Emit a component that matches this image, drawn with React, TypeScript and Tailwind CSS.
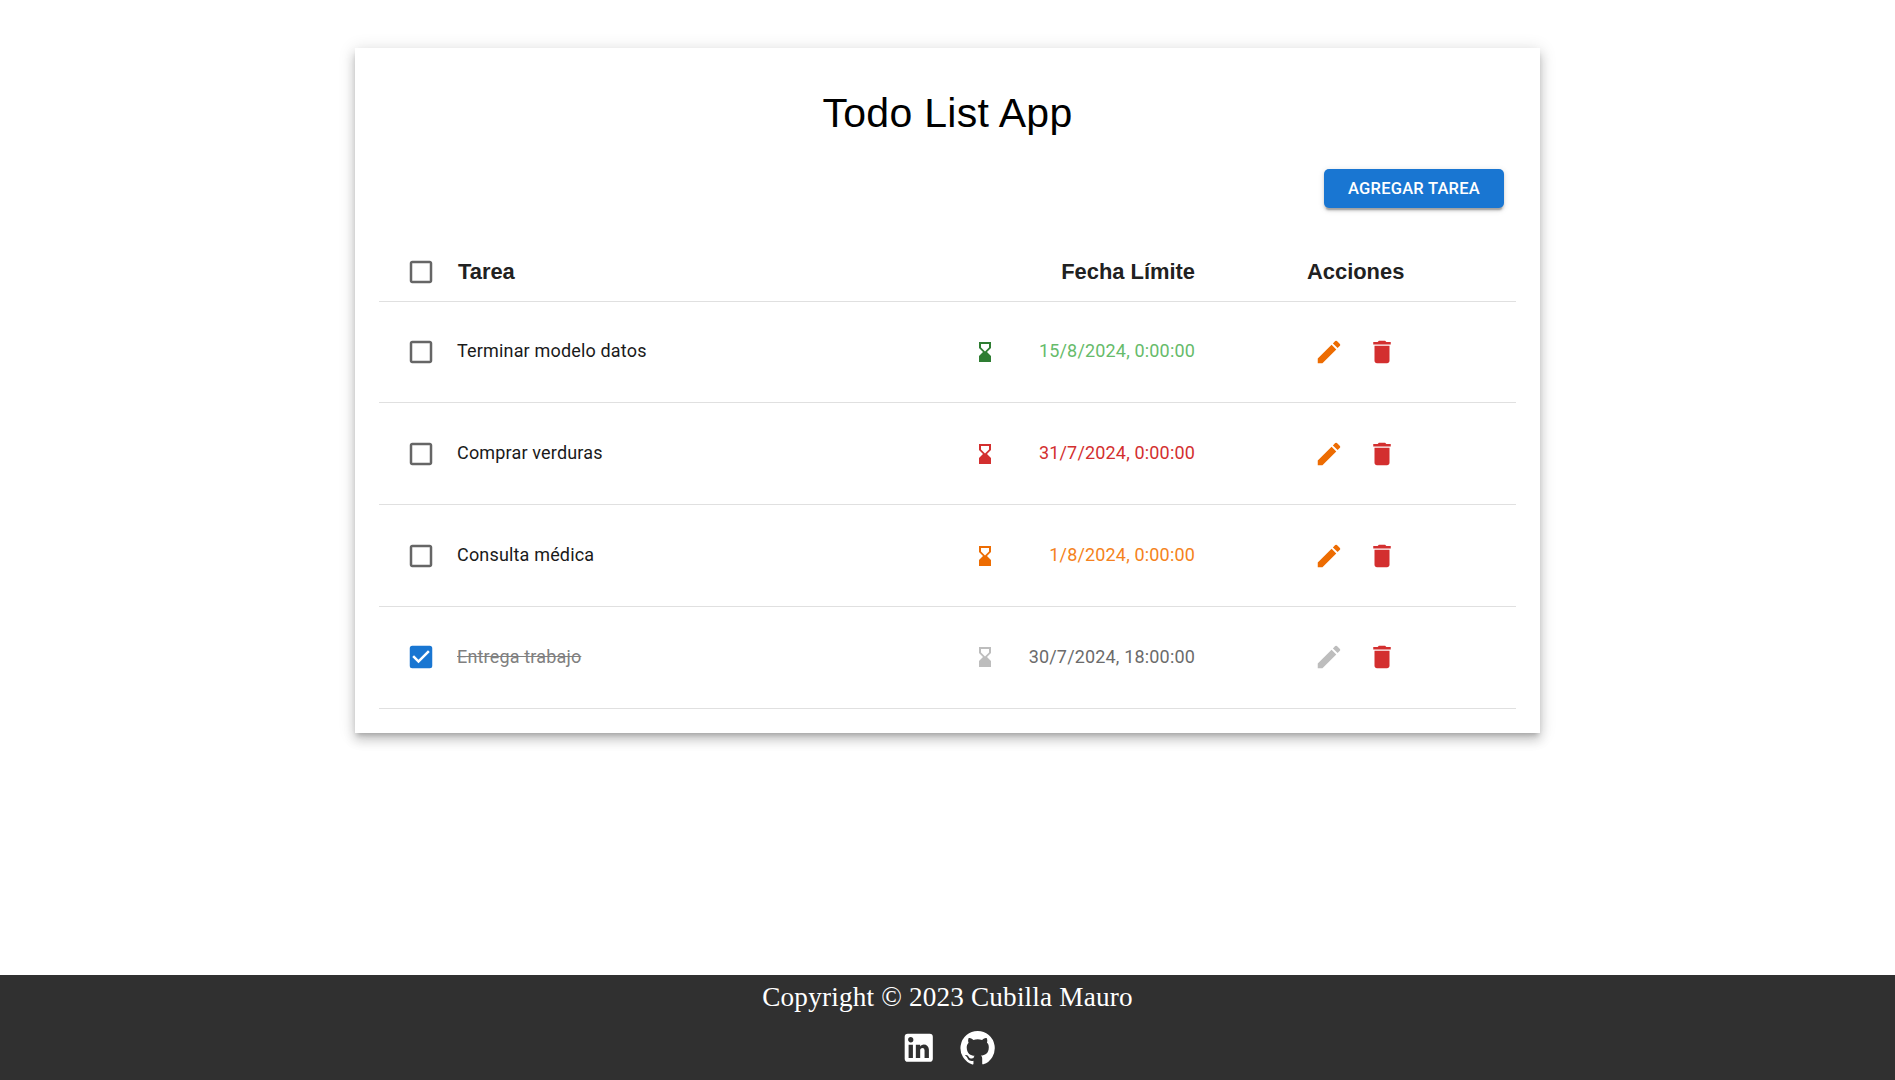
import { MdCheckBox, MdCheckBoxOutlineBlank, MdCreate, MdDelete, MdHourglassBottom } from 'react-icons/md';

type Task = {
  name: string;
  due: string;
  done: boolean;
  icon: string;
  date: string;
  height: string;
};

const tasks: Task[] = [
  { name: 'Terminar modelo datos', due: '15/8/2024, 0:00:00', done: false, icon: 'text-[#2e7d32]', date: 'text-[#66bb6a]', height: 'h-[101px]' },
  { name: 'Comprar verduras', due: '31/7/2024, 0:00:00', done: false, icon: 'text-[#d32f2f]', date: 'text-[#d32f2f]', height: 'h-[102px]' },
  { name: 'Consulta médica', due: '1/8/2024, 0:00:00', done: false, icon: 'text-[#ed6c02]', date: 'text-[#f58220]', height: 'h-[102px]' },
  { name: 'Entrega trabajo', due: '30/7/2024, 18:00:00', done: true, icon: 'text-[#bdbdbd]', date: 'text-[#6b6b6b]', height: 'h-[102px] pb-[2px]' },
];

function LinkedInIcon() {
  return (
    <svg viewBox="0 0 24 24" className="size-[37.5px] fill-current">
      <path d="M19 3a2 2 0 0 1 2 2v14a2 2 0 0 1-2 2H5a2 2 0 0 1-2-2V5a2 2 0 0 1 2-2h14m-.5 15.5v-5.3a3.26 3.26 0 0 0-3.26-3.26c-.85 0-1.84.52-2.32 1.3v-1.11h-2.79v8.37h2.79v-4.93c0-.77.62-1.4 1.39-1.4a1.4 1.4 0 0 1 1.4 1.4v4.93h2.79M6.88 8.56a1.68 1.68 0 0 0 1.68-1.68c0-.93-.75-1.69-1.68-1.69a1.69 1.69 0 0 0-1.69 1.69c0 .93.76 1.68 1.69 1.68m1.39 9.94v-8.37H5.5v8.37h2.77z" />
    </svg>
  );
}

function GitHubIcon() {
  return (
    <svg viewBox="0 0 24 24" className="size-[37.5px] fill-current">
      <path d="M12 1.27a11 11 0 0 0-3.48 21.46c.55.09.73-.28.73-.55v-1.84c-3.03.64-3.67-1.46-3.67-1.46-.55-1.29-1.28-1.65-1.28-1.65-.92-.65.1-.65.1-.65 1.1 0 1.73 1.1 1.73 1.1.92 1.65 2.57 1.2 3.21.92a2 2 0 0 1 .64-1.47c-2.47-.27-5.04-1.19-5.04-5.5 0-1.1.46-2.1 1.2-2.84a3.76 3.76 0 0 1 0-2.93s.91-.28 3.11 1.1c1.8-.49 3.7-.49 5.5 0 2.1-1.38 3.02-1.1 3.02-1.1a3.76 3.76 0 0 1 .1 2.83c.82.74 1.2 1.74 1.2 2.94 0 4.21-2.57 5.13-5.04 5.4.45.37.82.92.82 2.02v3.03c0 .27.1.64.73.55A11 11 0 0 0 12 1.27" />
    </svg>
  );
}

function Row({ task }: { task: Task }) {
  return (
    <div className={`flex items-center border-b border-[#e0e0e0] ${task.height}`}>
      <button className="ml-[27px] size-[30px] shrink-0" aria-label="Completar">
        {task.done ? <MdCheckBox size={30} className="text-[#1976d2]" /> : <MdCheckBoxOutlineBlank size={30} className="text-[#666666]" />}
      </button>
      <span
        className={`ml-[21px] w-[516px] text-lg leading-6 tracking-[0.17px] ${task.done ? 'text-[#808080] line-through' : 'mb-[2px] text-[#1a1a1a]'}`}
      >
        {task.name}
      </span>
      <MdHourglassBottom size={24} className={`shrink-0 ${task.icon}`} />
      <span className={`w-[198px] text-right text-lg leading-6 tracking-[0.17px] ${task.done ? '' : 'mb-[2px]'} ${task.date}`}>
        {task.due}
      </span>
      <button className="ml-[119.25px]" aria-label="Editar">
        <MdCreate size={30} className={task.done ? 'text-[#bdbdbd]' : 'text-[#ed6c02]'} />
      </button>
      <button className="ml-[23px]" aria-label="Eliminar">
        <MdDelete size={30} className="text-[#d32f2f]" />
      </button>
    </div>
  );
}

export default function App() {
  return (
    <div className="flex h-[1080px] flex-col justify-between overflow-hidden bg-white pt-12 font-['Roboto',sans-serif]">
      <main className="mx-auto h-[685px] w-[1185px] bg-white px-6 shadow-[0px_4px_5px_-2px_rgba(0,0,0,0.2),0px_7px_10px_1px_rgba(0,0,0,0.14),0px_2px_16px_1px_rgba(0,0,0,0.12)]">
        <h1 className="pt-[39px] text-center font-['Liberation_Sans',Arial,sans-serif] text-[41px] leading-[52px] tracking-[0.3px] text-black">
          Todo List App
        </h1>
        <div className="mt-[30px] flex justify-end pr-3">
          <button className="h-[39px] w-[180px] rounded-[5px] bg-[#1976d2] text-[16.5px] font-medium leading-[38px] tracking-[0.23px] text-white shadow-[0px_3.75px_1.25px_-2.5px_rgba(0,0,0,0.2),0px_2.5px_2.5px_0px_rgba(0,0,0,0.14),0px_1.25px_6.25px_0px_rgba(0,0,0,0.12)]">
            AGREGAR TAREA
          </button>
        </div>
        <div className="mt-[34px] flex h-[60px] items-center border-b border-[#e0e0e0] font-['Liberation_Sans',Arial,sans-serif] text-[21.9px] font-bold leading-[30px] text-[#212121]">
          <button className="ml-[27px] size-[30px] shrink-0" aria-label="Seleccionar todo">
            <MdCheckBoxOutlineBlank size={30} className="text-[#666666]" />
          </button>
          <span className="ml-[22px] w-[515px]">Tarea</span>
          <span className="w-[222px] text-right">Fecha Límite</span>
          <span className="ml-[112px]">Acciones</span>
        </div>
        {tasks.map((task) => (
          <Row key={task.name} task={task} />
        ))}
      </main>
      <footer className="flex h-[105px] flex-col items-center bg-[#303030] text-white">
        <p className="mt-[3px] font-['Liberation_Serif',serif] text-[27.2px] leading-[38px] tracking-[0.18px]">Copyright © 2023 Cubilla Mauro</p>
        <div className="mt-[13px] flex items-center gap-[22px] pl-px">
          <LinkedInIcon />
          <GitHubIcon />
        </div>
      </footer>
    </div>
  );
}
